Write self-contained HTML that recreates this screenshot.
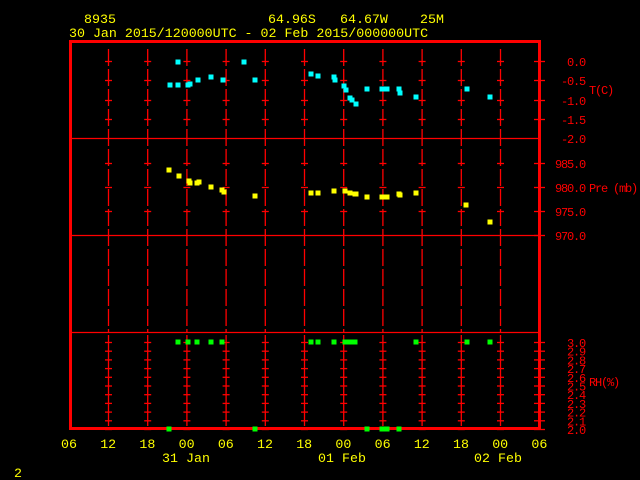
<!DOCTYPE html>
<html><head><meta charset="utf-8"><style>
html,body{margin:0;padding:0;background:#000;width:640px;height:480px;overflow:hidden}
svg{display:block}
text{font-family:"Liberation Mono",monospace;font-size:13.3px}
.y{fill:#ffff00}.r{fill:#ff0000}
.r text,text.r{font-size:12px;letter-spacing:-1.2px}
</style></head><body>
<svg id="s" width="640" height="480" xmlns="http://www.w3.org/2000/svg">
<rect width="640" height="480" fill="#000"/>
<g id="grid" stroke="#f00" stroke-width="1.3"></g>
<rect x="70.5" y="41.5" width="469" height="387" fill="none" stroke="#f00" stroke-width="3"/>
<line x1="70" y1="138.5" x2="540" y2="138.5" stroke="#f00" stroke-width="1.3"/>
<line x1="70" y1="235.5" x2="540" y2="235.5" stroke="#f00" stroke-width="1.3"/>
<line x1="70" y1="332.5" x2="540" y2="332.5" stroke="#f00" stroke-width="1.3"/>
<g id="pts"></g>
<text class="y" x="84" y="23">8935</text>
<text class="y" x="268" y="23">64.96S</text>
<text class="y" x="340" y="23">64.67W</text>
<text class="y" x="420" y="23">25M</text>
<text class="y" x="69" y="37">30 Jan 2015/120000UTC - 02 Feb 2015/000000UTC</text>
<g class="r" text-anchor="end">
<text x="585" y="66">0.0</text><text x="585" y="85">-0.5</text><text x="585" y="105">-1.0</text><text x="585" y="124">-1.5</text><text x="585" y="143">-2.0</text>
<text x="585" y="168">985.0</text><text x="585" y="192">980.0</text><text x="585" y="216">975.0</text><text x="585" y="240">970.0</text>
</g>
<g class="r" id="rh" text-anchor="end"></g>
<text class="r" x="589" y="94">T(C)</text>
<text class="r" x="589" y="192">Pre (mb)</text>
<text class="r" x="589" y="386">RH(%)</text>
<g class="y" text-anchor="middle" id="xl"></g>
<text class="y" x="186" y="462" text-anchor="middle">31 Jan</text>
<text class="y" x="342" y="462" text-anchor="middle">01 Feb</text>
<text class="y" x="498" y="462" text-anchor="middle">02 Feb</text>
<text class="y" x="14" y="477">2</text>
</svg>
<script>
var NS="http://www.w3.org/2000/svg";
function el(p,n,a){var e=document.createElementNS(NS,n);for(var k in a)e.setAttribute(k,a[k]);p.appendChild(e);return e;}
var g=document.getElementById('grid');
var ticks=[61,80,100,119,163,187,211];
var rh=[];for(var i=0;i<=10;i++)rh.push(342+i*8.7);
for(var k=0;k<11;k++){
 var x=108.5+k*39.2;
 el(g,'line',{x1:x,y1:49,x2:x,y2:332,'stroke-dasharray':'17,3'});
 el(g,'line',{x1:x,y1:335,x2:x,y2:426});
 ticks.concat(rh).forEach(function(y){el(g,'line',{x1:x-3.5,y1:y+.5,x2:x+3.5,y2:y+.5});});
}
ticks.concat(rh).forEach(function(y){el(g,'line',{x1:534,y1:y+.5,x2:545,y2:y+.5});});
el(g,'line',{x1:534,y1:235.5,x2:545,y2:235.5});
var r=document.getElementById('rh');
for(var i=0;i<=10;i++){var t=el(r,'text',{x:585,y:rh[10-i]+5});t.textContent=(2+i/10).toFixed(1);}
var xl=document.getElementById('xl'),lab=['06','12','18','00','06','12','18','00','06','12','18','00','06'];
for(var i=0;i<13;i++){var t=el(xl,'text',{x:69+i*39.2,y:448});t.textContent=lab[i];}
var P=document.getElementById('pts');
function sq(c,L){L.forEach(function(p){el(P,'rect',{x:p[0]-2.5,y:p[1]-2.5,width:5,height:5,fill:c});});}
sq('#00ffff',[[178,62],[170,85],[178,85],[190,84],[188,85],[198,80],[211,77],[223,80],[244,62],[255,80],[311,74],[318,76],[334,77],[335,80],[344,86],[346,90],[350,98],[352,100],[356,104],[367,89],[382,89],[387,89],[399,89],[400,93],[416,97],[467,89],[490,97]]);
sq('#ffff00',[[169,170],[179,176],[189,181],[190,183],[197,183],[199,182],[211,187],[222,190],[224,192],[255,196],[311,193],[318,193],[334,191],[345,191],[350,193],[355,194],[356,194],[367,197],[382,197],[387,197],[399,194],[400,195],[416,193],[466,205],[490,222]]);
sq('#00ff00',[[178,342],[188,342],[197,342],[211,342],[222,342],[311,342],[318,342],[334,342],[345,342],[348,342],[350,342],[355,342],[416,342],[467,342],[490,342],[169,429],[255,429],[367,429],[382,429],[387,429],[399,429]]);
</script>
</body></html>
